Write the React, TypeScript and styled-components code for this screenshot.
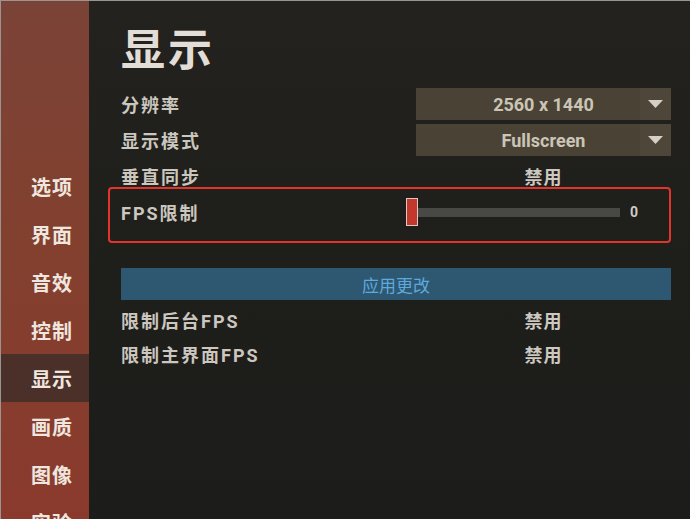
import React from "react";
import styled, { createGlobalStyle } from "styled-components";

const Global = createGlobalStyle`
  html, body { margin: 0; padding: 0; background: #1e1e1b; }
  body { width: 690px; height: 519px; overflow: hidden; }
  * { box-sizing: border-box; }
`;

const CJK = `"Roboto", "Noto Sans CJK SC", "Noto Sans", sans-serif`;

const Screen = styled.div`
  width: 690px;
  height: 519px;
  display: flex;
  border: 1px solid #9a9590;
  border-right: none;
  border-bottom: none;
  overflow: hidden;
  font-family: ${CJK};
`;

const Sidebar = styled.nav`
  width: 88px;
  flex: none;
  display: flex;
  flex-direction: column;
  padding-top: 161px;
  background: linear-gradient(180deg, #7b4337 0%, #82402f 45%, #8a3a2d 100%);
`;

const NavItem = styled.div<{ $active?: boolean }>`
  height: 48px;
  flex: none;
  display: flex;
  align-items: center;
  justify-content: flex-end;
  padding-right: 16px;
  font-size: 20px;
  font-weight: 700;
  letter-spacing: 1px;
  color: #efe6df;
  background: ${(p) => (p.$active ? "#4b2f29" : "transparent")};
`;

const Main = styled.main`
  flex: 1;
  display: flex;
  flex-direction: column;
  padding: 19px 19px 0 32px;
  background: linear-gradient(180deg, #23221e 0%, #1e1e1b 50%, #1c1c1a 100%);
`;

const Title = styled.h1`
  margin: 0 0 4px 0;
  font-size: 44px;
  line-height: 62px;
  font-weight: 700;
  letter-spacing: 3px;
  color: #e2ddd6;
`;

const Row = styled.div<{ $h?: number }>`
  height: ${(p) => p.$h ?? 36}px;
  display: grid;
  grid-template-columns: 295px 1fr;
  align-items: center;
`;

const Label = styled.span`
  font-size: 18px;
  font-weight: 700;
  letter-spacing: 2px;
  color: #cbc7bf;
`;

const Value = styled.span`
  text-align: center;
  font-size: 18px;
  font-weight: 700;
  letter-spacing: 1px;
  color: #cdc8c0;
`;

const Select = styled.div`
  height: 32px;
  display: flex;
  background: #4a4335;
`;

const SelectText = styled.span`
  flex: 1;
  display: flex;
  align-items: center;
  justify-content: center;
  padding-left: 31px;
  font-family: "Roboto", sans-serif;
  font-size: 18px;
  font-weight: 700;
  color: #cbc5b7;
`;

const SelectArrow = styled.span`
  width: 31px;
  display: flex;
  align-items: center;
  justify-content: center;
  background: #4d4639;
`;

const Highlight = styled.div`
  height: 56px;
  margin: -7px 0 0 -13px;
  padding: 0 0 6px 11px;
  border: 2px solid #e3342c;
  border-radius: 4px;
  display: grid;
  grid-template-columns: 285px 1fr;
  align-items: center;
`;

const Slider = styled.div`
  display: flex;
  align-items: center;
`;

const Thumb = styled.span`
  width: 12px;
  height: 28px;
  background: #c4372c;
  border: 1.5px solid #d9c9c1;
  flex: none;
`;

const Track = styled.span`
  width: 202px;
  height: 9px;
  background: #484845;
  flex: none;
`;

const SliderValue = styled.span`
  margin-left: 10px;
  font-family: "Roboto", sans-serif;
  font-size: 14px;
  font-weight: 700;
  color: #cfcbc4;
`;

const ApplyButton = styled.button`
  margin-top: 25px;
  height: 32px;
  border: none;
  padding: 0;
  background: #2e5772;
  color: #5eaadc;
  font-family: ${CJK};
  font-size: 17px;
  font-weight: 400;
  cursor: pointer;
`;

const Spacer = styled.div`
  height: 3px;
`;

const Arrow = () => (
  <svg width="15" height="9" viewBox="0 0 15 9">
    <polygon points="0,0 15,0 7.5,8" fill="#d4d0c8" />
  </svg>
);

export default function App() {
  const nav = ["选项", "界面", "音效", "控制", "显示", "画质", "图像", "实验"];
  return (
    <>
      <Global />
      <Screen>
        <Sidebar>
          {nav.map((n) => (
            <NavItem key={n} $active={n === "显示"}>
              {n}
            </NavItem>
          ))}
        </Sidebar>
        <Main>
          <Title>显示</Title>
          <Row>
            <Label>分辨率</Label>
            <Select>
              <SelectText>2560 x 1440</SelectText>
              <SelectArrow>
                <Arrow />
              </SelectArrow>
            </Select>
          </Row>
          <Row>
            <Label>显示模式</Label>
            <Select>
              <SelectText>Fullscreen</SelectText>
              <SelectArrow>
                <Arrow />
              </SelectArrow>
            </Select>
          </Row>
          <Row>
            <Label>垂直同步</Label>
            <Value>禁用</Value>
          </Row>
          <Highlight>
            <Label>FPS限制</Label>
            <Slider>
              <Thumb />
              <Track />
              <SliderValue>0</SliderValue>
            </Slider>
          </Highlight>
          <ApplyButton>应用更改</ApplyButton>
          <Spacer />
          <Row $h={34}>
            <Label>限制后台FPS</Label>
            <Value>禁用</Value>
          </Row>
          <Row $h={34}>
            <Label>限制主界面FPS</Label>
            <Value>禁用</Value>
          </Row>
        </Main>
      </Screen>
    </>
  );
}
